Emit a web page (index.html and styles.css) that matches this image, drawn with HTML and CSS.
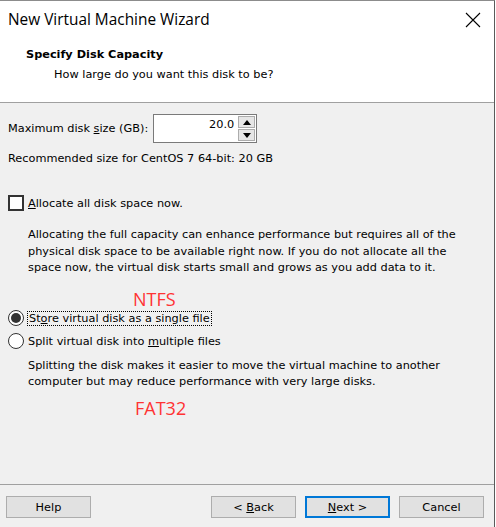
FILE: index.html
```html
<!DOCTYPE html>
<html lang="en">
<head>
    <meta charset="UTF-8">
    <title>New Virtual Machine Wizard</title>
    <link rel="stylesheet" href="styles.css">
</head>
<body>
    <div class="window">
        <!-- Title bar -->
        <div class="titlebar">
            <span class="title">New Virtual Machine Wizard</span>
            <svg class="close" width="16" height="16" viewBox="0 0 16 16">
                <path d="M1 1 L15 15 M15 1 L1 15" stroke="#000" stroke-width="1.1" fill="none"/>
            </svg>
        </div>

        <!-- Page header -->
        <div class="header">
            <div class="header-title">Specify Disk Capacity</div>
            <div class="header-sub">How large do you want this disk to be?</div>
        </div>

        <!-- Page body -->
        <div class="content">
            <div class="size-row">
                <label for="size">Maximum disk <u>s</u>ize (GB):</label>
                <div class="spin">
                    <input type="text" id="size" value="20.0">
                    <div class="spin-btns">
                        <span class="spin-btn">
                            <svg width="8" height="5" viewBox="0 0 8 5"><path d="M0 5 L4 0 L8 5 Z" fill="#000"/></svg>
                        </span>
                        <span class="spin-btn">
                            <svg width="8" height="5" viewBox="0 0 8 5"><path d="M0 0 L4 5 L8 0 Z" fill="#000"/></svg>
                        </span>
                    </div>
                </div>
            </div>
            <div class="recommend">Recommended size for CentOS 7 64-bit: 20 GB</div>

            <div class="option check-row">
                <span class="checkbox"></span>
                <span><u>A</u>llocate all disk space now.</span>
            </div>
            <p class="desc">Allocating the full capacity can enhance performance but requires all of the physical disk space to be available right now. If you do not allocate all the space now, the virtual disk starts small and grows as you add data to it.</p>

            <div class="note">NTFS</div>
            <div class="option radio-row">
                <span class="radio checked"></span>
                <span class="focus">St<u>o</u>re virtual disk as a single file</span>
            </div>
            <div class="option radio-row second">
                <span class="radio"></span>
                <span>Split virtual disk into <u>m</u>ultiple files</span>
            </div>
            <p class="desc desc-split">Splitting the disk makes it easier to move the virtual machine to another computer but may reduce performance with very large disks.</p>
            <div class="note note-fat">FAT32</div>
        </div>

        <!-- Buttons -->
        <div class="footer">
            <button class="btn">Help</button>
            <div class="btn-group">
                <button class="btn">&lt; <u>B</u>ack</button>
                <button class="btn default"><u>N</u>ext &gt;</button>
                <button class="btn">Cancel</button>
            </div>
        </div>
    </div>
</body>
</html>
```

FILE: styles.css
```css
body {
    margin: 0;
    background-color: #ffffff;
    font-family: "DejaVu Sans", sans-serif;
    font-size: 11.3px;
    color: #000;
}

.window {
    width: 494px;
    height: 526px;
    border-top: 1px solid #8c8c8c;
    border-right: 1px solid #5a5a5a;
    background-color: #f0f0f0;
    display: flex;
    flex-direction: column;
}

.titlebar {
    height: 39px;
    background-color: #fff;
    display: flex;
    align-items: center;
    justify-content: space-between;
    padding: 0 13px 2px 8px;
    box-sizing: border-box;
}

.title {
    font-family: "Open Sans", sans-serif;
    font-size: 15.4px;
}

.header {
    height: 63px;
    background-color: #fff;
    border-bottom: 1px solid #a0a0a0;
    box-sizing: border-box;
    padding-top: 8px;
}

.header-title {
    font-weight: bold;
    padding-left: 26px;
    height: 20px;
}

.header-sub {
    padding-left: 54px;
}

.content {
    flex: 1;
    padding: 11px 8px 0 8px;
}

.size-row {
    display: flex;
    align-items: center;
    gap: 5px;
}

.spin {
    display: flex;
    border: 1px solid #7a7a7a;
    background-color: #fff;
    height: 29px;
    box-sizing: border-box;
}

.spin input {
    width: 80px;
    border: none;
    text-align: right;
    font-family: inherit;
    font-size: 11.3px;
    padding: 0 3px 0 0;
    outline: none;
    align-self: flex-start;
    height: 16px;
    margin-top: 1px;
}

.spin-btns {
    display: flex;
    flex-direction: column;
    padding: 1px;
    gap: 1px;
}

.spin-btn {
    width: 17px;
    flex: 1;
    background-color: #e6e6e6;
    border: 1px solid #acacac;
    box-sizing: border-box;
    display: flex;
    align-items: center;
    justify-content: center;
}

.recommend {
    margin-top: 9px;
}

.option {
    display: flex;
    align-items: center;
    gap: 4px;
}

.check-row {
    margin-top: 30px;
}

.checkbox {
    width: 12px;
    height: 12px;
    border: 2px solid #333;
    background-color: #fff;
}

.desc {
    margin: 16px 0 0 20px;
    line-height: 16.5px;
    max-width: 440px;
}

.desc-split {
    margin-top: 8px;
}

.note {
    color: #ff3333;
    font-family: "Open Sans", sans-serif;
    font-size: 18px;
    margin: 11px 0 0 125px;
    line-height: 22px;
}

.note-fat {
    margin-top: 6px;
    margin-left: 127px;
}

.radio-row {
    height: 17px;
}

.radio-row.second {
    margin-top: 6px;
}

.radio {
    width: 14px;
    height: 14px;
    border: 1px solid #333;
    border-radius: 50%;
    background-color: #fff;
    position: relative;
}

.radio.checked::after {
    content: "";
    position: absolute;
    left: 2px;
    top: 2px;
    width: 10px;
    height: 10px;
    border-radius: 50%;
    background-color: #333;
}

.focus {
    outline: 1px dotted #000;
    padding: 0 1px;
}

.footer {
    height: 43px;
    border-top: 1px solid #a0a0a0;
    display: flex;
    align-items: flex-start;
    justify-content: space-between;
    padding: 11px 10px 0 6px;
    box-sizing: border-box;
}

.btn-group {
    display: flex;
    gap: 9px;
}

.btn {
    width: 85px;
    height: 22px;
    background-color: #e1e1e1;
    border: 1px solid #adadad;
    font-family: inherit;
    font-size: 11.3px;
    padding: 0;
    color: #000;
}

.btn.default {
    border: 2px solid #0078d7;
}
```
